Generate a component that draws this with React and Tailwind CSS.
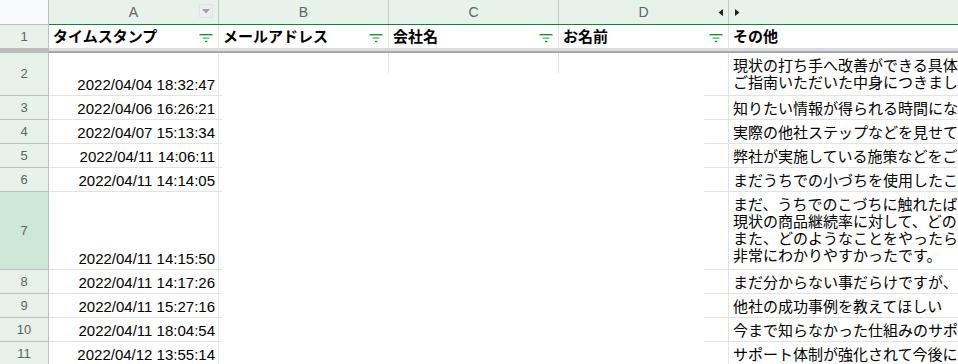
const JP = { fontFamily: '"Liberation Sans", "Noto Sans CJK JP", sans-serif' };

const ROWS = [
  { n: 2, h: 'h-[43px]', t: '2022/04/04 18:32:47', lines: ['現状の打ち手へ改善ができる具体', 'ご指南いただいた中身につきまし'] },
  { n: 3, h: 'h-[24px]', t: '2022/04/06 16:26:21', lines: ['知りたい情報が得られる時間にな'] },
  { n: 4, h: 'h-[24px]', t: '2022/04/07 15:13:34', lines: ['実際の他社ステップなどを見せて'] },
  { n: 5, h: 'h-[24px]', t: '2022/04/11 14:06:11', lines: ['弊社が実施している施策などをご'] },
  { n: 6, h: 'h-[24px]', t: '2022/04/11 14:14:05', lines: ['まだうちでの小づちを使用したこ'] },
  {
    n: 7, h: 'h-[78px]', t: '2022/04/11 14:15:50', sel: true,
    lines: ['まだ、うちでのこづちに触れたば', '現状の商品継続率に対して、どの', 'また、どのようなことをやったら', '非常にわかりやすかったです。'],
  },
  { n: 8, h: 'h-[24px]', t: '2022/04/11 14:17:26', lines: ['まだ分からない事だらけですが、'] },
  { n: 9, h: 'h-[24px]', t: '2022/04/11 15:27:16', lines: ['他社の成功事例を教えてほしい'] },
  { n: 10, h: 'h-[24px]', t: '2022/04/11 18:04:54', lines: ['今まで知らなかった仕組みのサポ'] },
  { n: 11, h: 'h-[24px]', t: '2022/04/12 13:55:14', lines: ['サポート体制が強化されて今後に'] },
];

const HEADERS = ['タイムスタンプ', 'メールアドレス', '会社名', 'お名前'];

function FilterIcon() {
  return (
    <svg width="14" height="10" viewBox="0 0 14 10" className="shrink-0 mt-[2px]">
      <rect x="0.5" y="1" width="13" height="1.4" fill="#1e8e3e" />
      <rect x="3.5" y="4.4" width="7" height="1.4" fill="#5bb974" />
      <rect x="6" y="7.8" width="2.4" height="1.4" fill="#1e8e3e" />
    </svg>
  );
}

function Row({ r }) {
  return (
    <div className={`flex ${r.h}`}>
      <div
        className={`w-[49px] shrink-0 flex items-center justify-center border-r border-b border-[#c0c0c0] text-[13px] text-[#5f6368] ${
          r.sel ? 'bg-[#cee8d8]' : 'bg-[#e7f2ea]'
        }`}
      >
        {r.n}
      </div>
      <div className="w-[170px] shrink-0 flex items-end justify-end border-r border-b border-[#e2e3e3] pr-[3px] pb-[2px] text-[15px] leading-[17px] text-black">
        {r.t}
      </div>
      <div className="w-[170px] shrink-0 border-r border-b border-[#e2e3e3]" />
      <div className="w-[170px] shrink-0 border-r border-b border-[#e2e3e3]" />
      <div className="w-[170px] shrink-0 border-r border-b border-[#e2e3e3]" />
      <div className="flex-1 min-w-0 overflow-hidden border-b border-[#e2e3e3] pl-[4px] pt-[4px] text-[15px] leading-[17px] text-black">
        {r.lines.map((l, i) => (
          <div key={i} className="whitespace-nowrap">{l}</div>
        ))}
      </div>
    </div>
  );
}

export default function App() {
  return (
    <div className="relative w-[958px] h-[364px] overflow-hidden bg-white" style={JP}>
      {/* column letters */}
      <div className="flex h-[25px]">
        <div className="w-[49px] shrink-0 bg-[#f8f9fa] border-r border-b border-[#c0c0c0]" />
        <div className="flex flex-1 bg-[#e7f2ea] border-b border-[#188038] text-[14px] text-[#5f6368]">
          <div className="w-[170px] shrink-0 relative flex items-center justify-center border-r border-[#c4c7c5]">
            A
            <span className="absolute right-[5px] top-[4px] w-[14px] h-[14px] rounded-[2px] bg-[#eceeef] border border-[#e0e2e3] flex items-center justify-center">
              <svg width="8" height="5" viewBox="0 0 8 5">
                <path d="M0 0 L8 0 L4 4.5 Z" fill="#9aa0a6" />
              </svg>
            </span>
          </div>
          <div className="w-[170px] shrink-0 flex items-center justify-center border-r border-[#c4c7c5]">B</div>
          <div className="w-[170px] shrink-0 flex items-center justify-center border-r border-[#c4c7c5]">C</div>
          <div className="w-[170px] shrink-0 relative flex items-center justify-center border-r border-[#c4c7c5]">
            D
            <svg width="5" height="7" viewBox="0 0 5 7" className="absolute right-[5px] top-[9px]">
              <path d="M5 0 L5 7 L0.5 3.5 Z" fill="#202124" />
            </svg>
          </div>
          <div className="flex-1 flex items-center pl-[6px]">
            <svg width="5" height="7" viewBox="0 0 5 7">
              <path d="M0 0 L0 7 L4.5 3.5 Z" fill="#202124" />
            </svg>
          </div>
        </div>
      </div>

      {/* header row 1 */}
      <div className="flex h-[23px]">
        <div className="w-[49px] shrink-0 flex items-center justify-center bg-[#e7f2ea] border-r border-[#c0c0c0] text-[13px] text-[#5f6368]">
          1
        </div>
        {HEADERS.map((h) => (
          <div
            key={h}
            className="w-[170px] shrink-0 flex items-center justify-between border-r border-[#e2e3e3] pl-[4px] pr-[5px] pt-[1px] text-[15px] font-bold text-black"
          >
            <span>{h}</span>
            <FilterIcon />
          </div>
        ))}
        <div className="flex-1 flex items-center pl-[4px] pt-[1px] text-[15px] font-bold text-black">その他</div>
      </div>

      {/* freeze bar */}
      <div className="flex h-[5px]">
        <div className="w-[49px] shrink-0 bg-[#bdbdbd]" />
        <div className="flex-1 bg-[#dadce0] border-b-2 border-[#a8a8a8]" />
      </div>

      {ROWS.map((r) => (
        <Row key={r.n} r={r} />
      ))}

      {/* redacted block over columns B-D */}
      <div className="absolute left-[222px] top-[73px] w-[482px] h-[300px] bg-white" />
    </div>
  );
}
